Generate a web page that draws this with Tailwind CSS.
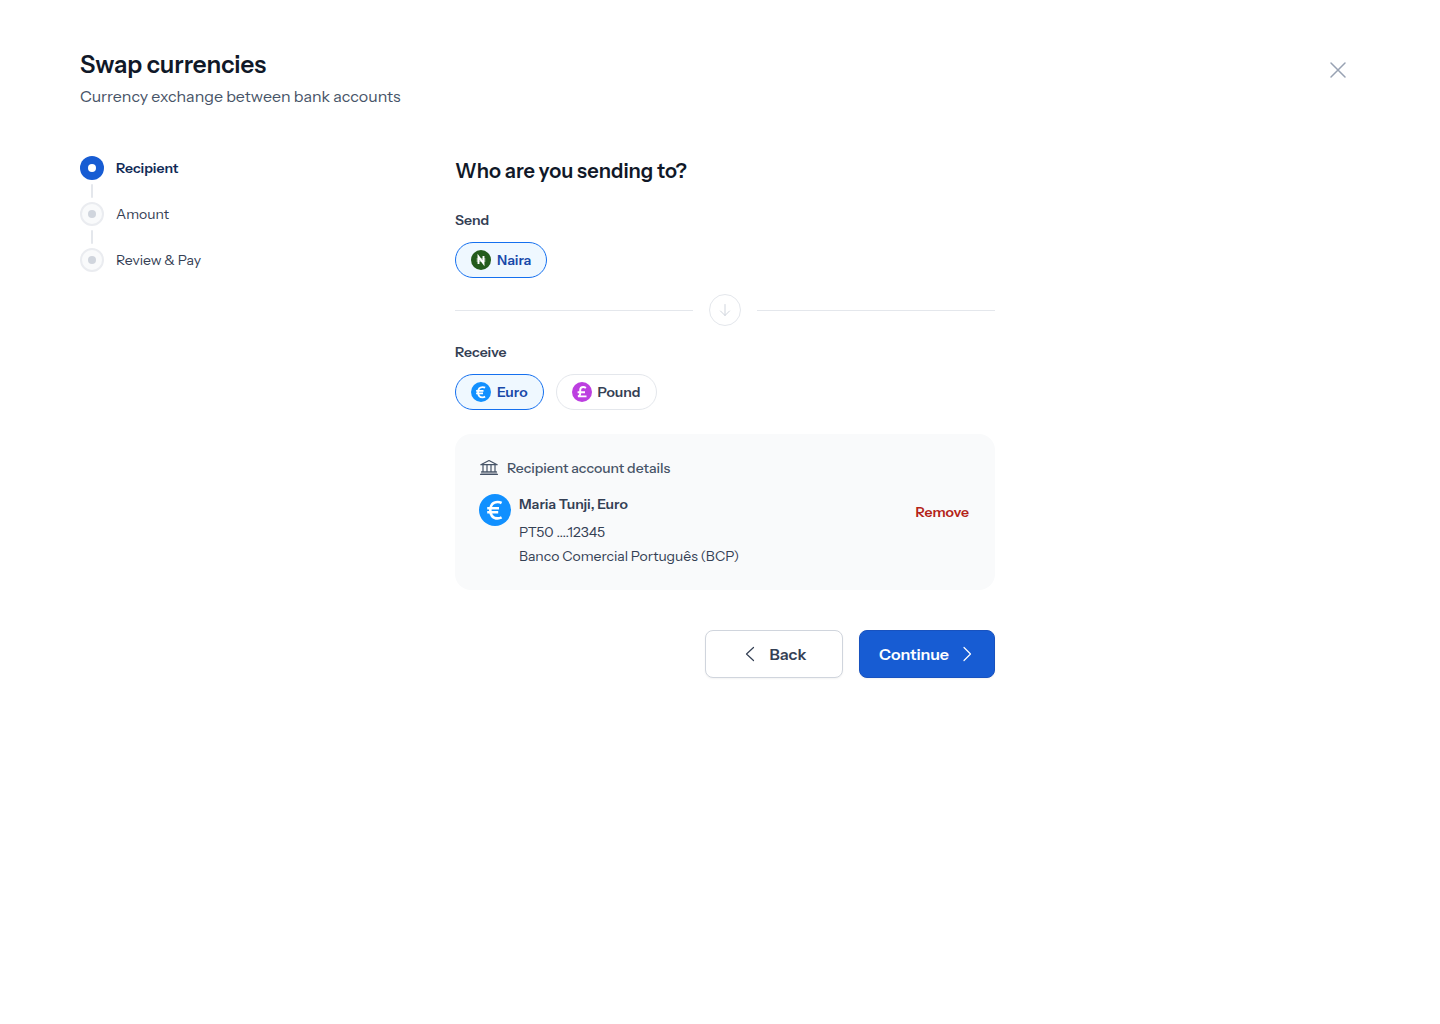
<!DOCTYPE html>
<html lang="en">
<head>
    <meta charset="UTF-8">
    <meta name="viewport" content="width=device-width, initial-scale=1.0">
    <title>Swap currencies</title>
    <script src="https://cdn.jsdelivr.net/npm/@tailwindcss/browser@4"></script>
    <style>
        body {
            font-family: 'Instrument Sans', 'Inter', sans-serif;
        }
    </style>
</head>
<body class="bg-white min-h-screen px-20 py-12 text-[#344054]">
    <header class="flex items-start justify-between">
        <div>
            <h1 class="text-2xl leading-[34px] font-semibold text-[#101828]">Swap currencies</h1>
            <p class="mt-0.5 text-base leading-6 text-[#475467]">Currency exchange between bank accounts</p>
        </div>
        <button type="button" aria-label="Close" class="flex size-11 items-center justify-center text-[#98A2B3]">
            <svg class="size-6" viewBox="0 0 24 24" fill="none" stroke="currentColor" stroke-width="1.5" stroke-linecap="round"><path d="M5 5l14 14M19 5L5 19"/></svg>
        </button>
    </header>

    <div class="mt-12 flex items-start">
        <!-- Steps -->
        <nav class="w-[375px] shrink-0" aria-label="Progress">
            <ol class="flex flex-col gap-1 text-sm leading-6">
                <li class="flex flex-col gap-1">
                    <div class="flex items-center gap-3">
                        <span class="flex size-6 items-center justify-center rounded-full bg-[#175CD3]"><span class="size-2 rounded-full bg-white"></span></span>
                        <span class="font-semibold text-[#102A56]">Recipient</span>
                    </div>
                    <span class="ml-[11px] h-[14px] w-[2px] rounded-sm bg-[#E4E7EC]"></span>
                </li>
                <li class="flex flex-col gap-1">
                    <div class="flex items-center gap-3">
                        <span class="flex size-6 items-center justify-center rounded-full border-2 border-[#EAECF0] bg-[#F9FAFB]"><span class="size-2 rounded-full bg-[#D0D5DD]"></span></span>
                        <span>Amount</span>
                    </div>
                    <span class="ml-[11px] h-[14px] w-[2px] rounded-sm bg-[#E4E7EC]"></span>
                </li>
                <li class="flex items-center gap-3">
                    <span class="flex size-6 items-center justify-center rounded-full border-2 border-[#EAECF0] bg-[#F9FAFB]"><span class="size-2 rounded-full bg-[#D0D5DD]"></span></span>
                    <span>Review &amp; Pay</span>
                </li>
            </ol>
        </nav>

        <main class="max-w-[540px] flex-1">
            <h2 class="text-xl leading-[30px] font-semibold text-[#101828]">Who are you sending to?</h2>

            <h3 class="mt-6 text-sm leading-5 font-semibold">Send</h3>
            <div class="mt-3 flex gap-3">
                <button type="button" class="flex h-9 items-center gap-1.5 rounded-full border border-[#1570EF] bg-[#EFF8FF] px-[15px] text-sm font-semibold text-[#1849A9]">
                    <svg class="size-5" viewBox="0 0 20 20" fill="none"><circle cx="10" cy="10" r="10" fill="#245C1C"/><path d="M7.500 14V6.600l5 6.800V6" stroke="#fff" stroke-width="1.900"/><path d="M5.600 9h8.800M5.600 11h8.800" stroke="#fff" stroke-width=".8"/></svg>
                    Naira
                </button>
            </div>

            <div class="my-4 flex items-center gap-4">
                <div class="h-px flex-1 bg-[#E4E7EC]"></div>
                <div class="flex size-8 items-center justify-center rounded-full border border-[#E4E7EC]">
                    <svg class="size-4" viewBox="0 0 16 16" fill="none" stroke="#D0D5DD" stroke-width="1" stroke-linecap="round" stroke-linejoin="round"><path d="M8 2.500v11M3.500 9L8 13.500 12.500 9"/></svg>
                </div>
                <div class="h-px flex-1 bg-[#E4E7EC]"></div>
            </div>

            <h3 class="text-sm leading-5 font-semibold">Receive</h3>
            <div class="mt-3 flex gap-3">
                <button type="button" class="flex h-9 items-center gap-1.5 rounded-full border border-[#1570EF] bg-[#EFF8FF] px-[15px] text-sm font-semibold text-[#1849A9]">
                    <svg class="size-5" viewBox="0 0 32 32" fill="none"><circle cx="16" cy="16" r="16" fill="#1190FF"/><path d="M22.600 9C21.300 8.300 20 8 18.600 8C13.500 8 11.300 11.500 11.300 16.200C11.300 20.900 13.500 24.400 18.600 24.400C20 24.400 21.300 24.100 22.600 23.400M8.200 14.200h11.800M8.200 18.300h11" stroke="#fff" stroke-width="2.800"/></svg>
                    Euro
                </button>
                <button type="button" class="flex h-9 items-center gap-1.5 rounded-full border border-[#E4E7EC] bg-white px-[15px] text-sm font-semibold">
                    <svg class="size-5" viewBox="0 0 20 20" fill="none"><circle cx="10" cy="10" r="10" fill="#BC3FE0"/><path d="M13.900 6C13 5.300 12.200 5 11.200 5C9.200 5 8.200 6.100 8.200 8V11.200C8.200 12.800 7.600 13.800 6 14.400H14.500M5.600 10.200H13" stroke="#fff" stroke-width="1.900"/></svg>
                    Pound
                </button>
            </div>

            <!-- Recipient card -->
            <section class="mt-6 rounded-2xl bg-[#F9FAFB] p-6">
                <div class="flex items-center gap-2 text-[#475467]">
                    <svg class="size-5" viewBox="0 0 20 20" fill="none" stroke="currentColor" stroke-width="1.200" stroke-linecap="round" stroke-linejoin="round"><path d="M1.800 6.700L10 2.500 18.200 6.700zM4 6.700v7.200M8 6.700v7.200M12 6.700v7.200M16 6.700v7.200M2.500 13.900h15M1.500 16.300h17"/><path d="M2.500 14h15l1 2.300h-17z" fill="currentColor" fill-opacity=".35" stroke="none"/></svg>
                    <h3 class="text-sm leading-5 font-medium">Recipient account details</h3>
                </div>
                <div class="mt-4 flex items-start gap-2">
                    <svg class="size-8 shrink-0" viewBox="0 0 32 32" fill="none"><circle cx="16" cy="16" r="16" fill="#1190FF"/><path d="M22.600 9C21.300 8.300 20 8 18.600 8C13.500 8 11.300 11.500 11.300 16.200C11.300 20.900 13.500 24.400 18.600 24.400C20 24.400 21.300 24.100 22.600 23.400M8.200 14.200h11.800M8.200 18.300h11" stroke="#fff" stroke-width="2.600"/></svg>
                    <div class="flex-1 text-sm leading-5">
                        <p class="font-semibold">Maria Tunji, Euro</p>
                        <p class="mt-2">PT50 ....12345</p>
                        <p class="mt-1">Banco Comercial Português (BCP)</p>
                    </div>
                    <button type="button" class="mt-2 pr-0.5 text-sm leading-5 font-semibold text-[#B42318]">Remove</button>
                </div>
            </section>

            <div class="mt-10 flex justify-end gap-4">
                <button type="button" class="flex h-12 w-[138px] items-center justify-center gap-2 rounded-lg border border-[#D0D5DD] bg-white pr-1 text-base font-semibold shadow-xs">
                    <svg class="size-6" viewBox="0 0 24 24" fill="none" stroke="currentColor" stroke-width="1.200" stroke-linecap="round" stroke-linejoin="round"><path d="M15.500 5.500L8.500 12l7 6.500"/></svg>
                    Back
                </button>
                <button type="button" class="flex h-12 w-[136px] items-center justify-center gap-2 rounded-lg border border-[#1852BF] bg-[#175CD3] pl-0.5 text-base font-semibold text-white shadow-xs">
                    Continue
                    <svg class="size-5" viewBox="0 0 20 20" fill="none" stroke="currentColor" stroke-width="1.200" stroke-linecap="round" stroke-linejoin="round"><path d="M7 3.500l6.500 6.500L7 16.500"/></svg>
                </button>
            </div>
        </main>
    </div>
</body>
</html>
